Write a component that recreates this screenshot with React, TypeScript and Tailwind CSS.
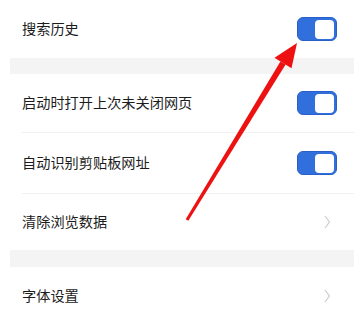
const Toggle = () => (
  <div className="flex h-[24px] w-[40px] items-center justify-end rounded-[6px] border border-[#2a5fc8] bg-[#3170dc] p-[2px]">
    <div className="h-[19px] w-[19px] rounded-[4px] bg-white" />
  </div>
);

const Chevron = () => (
  <svg width="8" height="14" viewBox="0 0 8 14">
    <polyline points="2,1 6.5,7 2,13" fill="none" stroke="#c8c8c8" strokeWidth="1.1" />
  </svg>
);

const Row = ({ label, right, h }: { label: string; right: 'toggle' | 'chevron'; h: string }) => (
  <div className={`flex items-center justify-between pl-[12px] pr-[17px] ${h}`}>
    <span className="text-[14.2px] text-[#1c1c1c]">{label}</span>
    {right === 'toggle' ? <Toggle /> : <div className="pr-[6px]"><Chevron /></div>}
  </div>
);

export default function App() {
  return (
    <div
      className="relative h-[323px] w-[364px] overflow-hidden bg-white px-[10px]"
      style={{ fontFamily: '"Noto Sans CJK SC", "Noto Sans", sans-serif' }}
    >
      <div className="flex flex-col">
        <Row label="搜索历史" right="toggle" h="h-[58px]" />
        <div className="h-[16px] bg-[#f4f4f4]" />
        <Row label="启动时打开上次未关闭网页" right="toggle" h="h-[58px]" />
        <div className="ml-[12px] h-px bg-[#f0f0f0]" />
        <Row label="自动识别剪贴板网址" right="toggle" h="h-[60px]" />
        <div className="ml-[12px] h-px bg-[#f0f0f0]" />
        <Row label="清除浏览数据" right="chevron" h="h-[56px]" />
        <div className="h-[17px] bg-[#f4f4f4]" />
        <Row label="字体设置" right="chevron" h="h-[58px]" />
      </div>

      {/* red annotation arrow */}
      <svg className="pointer-events-none absolute left-0 top-0" width="364" height="323" viewBox="0 0 364 323">
        <polygon points="185.7,219.3 188.3,220.7 285.6,64.6 280.4,61.4" fill="#ee1111" />
        <polygon points="297,43 274.5,57.7 291.5,68.3" fill="#ee1111" />
      </svg>
    </div>
  );
}
